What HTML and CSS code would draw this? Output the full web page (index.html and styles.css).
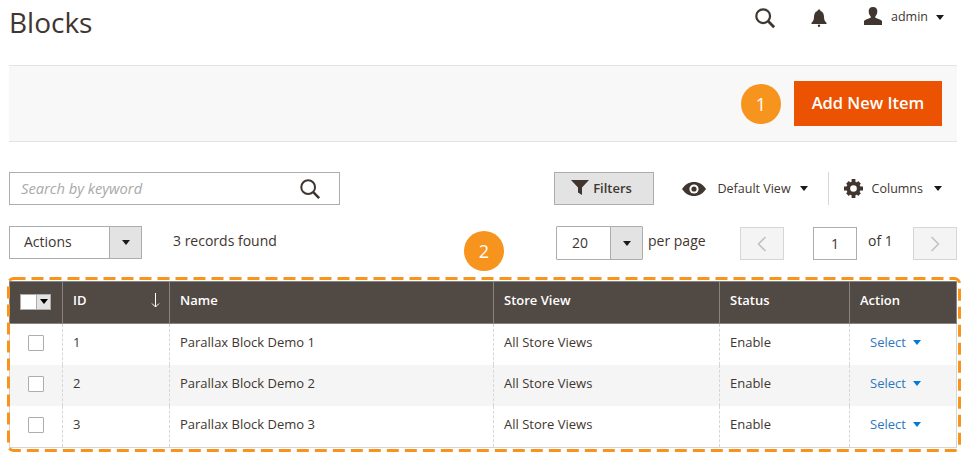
FILE: index.html
```html
<!DOCTYPE html>
<html lang="en">
<head>
    <meta charset="UTF-8">
    <title>Blocks</title>
    <link rel="stylesheet" href="styles.css">
</head>
<body>
    <div class="page">
        <header class="page-header">
            <h1>Blocks</h1>
            <div class="header-tools">
                <svg class="tool-search" width="22" height="22" viewBox="0 0 24 24"><circle cx="10" cy="10" r="7.500" fill="none" stroke="#41362f" stroke-width="2.400"/><path d="M15.500 15.500 L22 22" stroke="#41362f" stroke-width="3"/></svg>
                <svg class="tool-bell" width="16" height="18" viewBox="0 0 16 18"><path d="M8 0.500c1 0 1.500.7 1.500 1.400C12 2.700 13 5 13 8c0 3 1 4.500 2.500 5.800V15H.5v-1.200C2 12.500 3 11 3 8c0-3 1-5.300 3.500-6.100C6.500 1.200 7 .5 8 .5z" fill="#41362f"/><circle cx="8" cy="16.800" r="1.200" fill="#41362f"/></svg>
                <svg class="tool-user" width="20" height="18" viewBox="0 0 20 18"><path d="M10 0c3 0 4.500 2 4.300 4.800-.1 2-1 3.700-2 4.700v1.300c2.500 1 5.700 1.700 6.700 3.200V18H1v-4c1-1.500 4.200-2.200 6.700-3.200V9.500c-1-1-1.900-2.700-2-4.700C5.500 2 7 0 10 0z" fill="#41362f"/></svg>
                <span class="tool-name">admin</span>
                <span class="caret caret-small"></span>
            </div>
        </header>

        <div class="action-bar">
            <span class="callout callout-one">1</span>
            <button class="add-btn">Add New Item</button>
        </div>

        <div class="toolbar-row">
            <div class="search-box">
                <span class="search-hint">Search by keyword</span>
                <svg width="22" height="22" viewBox="0 0 24 24"><circle cx="10" cy="10" r="7.500" fill="none" stroke="#41362f" stroke-width="2.200"/><path d="M15.500 15.500 L22 22" stroke="#41362f" stroke-width="2.800"/></svg>
            </div>
            <div class="toolbar-right">
                <button class="filters-btn">
                    <svg width="18" height="15" viewBox="0 0 18 15"><path d="M0 0H18L11 7.500V15L7 12.500V7.500z" fill="#41362f"/></svg>
                    Filters
                </button>
                <div class="view-switch">
                    <svg width="24" height="14" viewBox="0 0 24 14"><path d="M0 7C3 2.500 7 0 12 0s9 2.500 12 7c-3 4.500-7 7-12 7S3 11.500 0 7z" fill="#41362f"/><circle cx="12" cy="7" r="4.600" fill="#fff"/><circle cx="12" cy="7" r="2.600" fill="#41362f"/></svg>
                    <span>Default View</span>
                    <span class="caret"></span>
                </div>
                <div class="columns-switch">
                    <svg width="19" height="19" viewBox="0 0 20 20"><circle cx="10" cy="10" r="5.500" fill="none" stroke="#41362f" stroke-width="4"/><path d="M8 0h4v4H8zM8 16h4v4H8zM0 8h4v4H0zM16 8h4v4h-4zM2.200 5 5 2.200 7.500 4.800 4.800 7.500zM15 2.200 17.800 5 15.200 7.500 12.500 4.800zM17.800 15 15 17.800 12.500 15.200 15.200 12.500zM5 17.800 2.200 15 4.800 12.500 7.500 15.200z" fill="#41362f"/></svg>
                    <span>Columns</span>
                    <span class="caret"></span>
                </div>
            </div>
        </div>

        <div class="pager-row">
            <div class="select-box actions-select">
                <span class="select-value">Actions</span>
                <span class="select-arrow"><span class="caret"></span></span>
            </div>
            <span class="records">3 records found</span>
            <span class="callout callout-two">2</span>
            <div class="pager">
                <div class="select-box size-select">
                    <span class="select-value">20</span>
                    <span class="select-arrow"><span class="caret"></span></span>
                </div>
                <span class="per-page">per page</span>
                <span class="page-btn"><svg width="10" height="16" viewBox="0 0 10 16"><path d="M8.500 1 L1.500 8 L8.500 15" fill="none" stroke="#c2c2c2" stroke-width="1.600"/></svg></span>
                <span class="page-input">1</span>
                <span class="page-of">of 1</span>
                <span class="page-btn"><svg width="10" height="16" viewBox="0 0 10 16"><path d="M1.500 1 L8.500 8 L1.500 15" fill="none" stroke="#c2c2c2" stroke-width="1.600"/></svg></span>
            </div>
        </div>

        <div class="grid-wrap">
            <svg class="dash-frame" width="954" height="175" viewBox="0 0 954 175"><rect x="1.500" y="1.500" width="951" height="172" rx="5" fill="none" stroke="#f7941d" stroke-width="3" stroke-dasharray="12 6"/></svg>
            <table class="grid">
                <thead>
                    <tr>
                        <th class="col-check"><span class="mass-select"><span class="mass-box"></span><span class="mass-arrow"><span class="caret"></span></span></span></th>
                        <th class="col-id">ID<svg class="sort-arrow" width="9" height="15" viewBox="0 0 9 15"><path d="M4.500 0V14M1 10.500 L4.500 14 L8 10.500" fill="none" stroke="#fff" stroke-width="1"/></svg></th>
                        <th class="col-name">Name</th>
                        <th class="col-store">Store View</th>
                        <th class="col-status">Status</th>
                        <th class="col-action">Action</th>
                    </tr>
                </thead>
                <tbody>
                    <tr>
                        <td class="cell-check"><span class="checkbox"></span></td>
                        <td>1</td>
                        <td>Parallax Block Demo 1</td>
                        <td>All Store Views</td>
                        <td>Enable</td>
                        <td class="cell-action"><span class="select-link">Select</span><span class="caret caret-blue"></span></td>
                    </tr>
                    <tr class="row-alt">
                        <td class="cell-check"><span class="checkbox"></span></td>
                        <td>2</td>
                        <td>Parallax Block Demo 2</td>
                        <td>All Store Views</td>
                        <td>Enable</td>
                        <td class="cell-action"><span class="select-link">Select</span><span class="caret caret-blue"></span></td>
                    </tr>
                    <tr class="row-last">
                        <td class="cell-check"><span class="checkbox"></span></td>
                        <td>3</td>
                        <td>Parallax Block Demo 3</td>
                        <td>All Store Views</td>
                        <td>Enable</td>
                        <td class="cell-action"><span class="select-link">Select</span><span class="caret caret-blue"></span></td>
                    </tr>
                </tbody>
            </table>
        </div>
    </div>
</body>
</html>
```

FILE: styles.css
```css
* {
    box-sizing: border-box;
}
html, body {
    height: 100%;
}
body {
    margin: 0;
    font-family: "Open Sans", sans-serif;
    font-size: 13px;
    color: #41362f;
    background-color: white;
    overflow: hidden;
}
.page {
    padding: 0 12px 0 9px;
}
.page-header {
    display: flex;
    justify-content: space-between;
    height: 65px;
}
h1 {
    margin: 3px 0 0;
    font-size: 28px;
    line-height: 38px;
    font-weight: 400;
    color: #41362f;
}
.header-tools {
    display: flex;
    align-items: flex-start;
    padding-top: 7px;
    padding-right: 13px;
}
.tool-search {
    margin-right: 35px;
}
.tool-bell {
    margin: 2px 36px 0 0;
}
.tool-user {
    margin: 0 8px 0 0;
}
.tool-name {
    font-size: 12.500px;
    line-height: 20px;
    margin-right: 8px;
    color: #41362f;
}
.caret {
    display: inline-block;
    width: 0;
    height: 0;
    border-left: 4.500px solid transparent;
    border-right: 4.500px solid transparent;
    border-top: 5px solid #1a1a1a;
}
.caret-small {
    margin-top: 8px;
}
.action-bar {
    display: flex;
    justify-content: flex-end;
    align-items: center;
    height: 77px;
    padding-right: 15px;
    background-color: #f8f8f8;
    border-top: 1px solid #e3e3e3;
    border-bottom: 1px solid #e3e3e3;
}
.callout {
    display: flex;
    align-items: center;
    justify-content: center;
    width: 40px;
    height: 40px;
    border-radius: 50%;
    background-color: #f7941d;
    color: white;
    font-size: 18px;
}
.callout-one {
    margin-right: 13px;
}
.callout-two {
    position: absolute;
    left: 464px;
    top: 231px;
}
.add-btn {
    width: 148px;
    height: 45px;
    padding: 0 0 2px;
    border: none;
    background-color: #eb5202;
    color: white;
    font-family: inherit;
    font-size: 16.500px;
    font-weight: 600;
}
.toolbar-row {
    display: flex;
    justify-content: space-between;
    margin-top: 30px;
    height: 33px;
}
.search-box {
    display: flex;
    align-items: center;
    justify-content: space-between;
    width: 331px;
    padding: 0 18px 0 11px;
    border: 1px solid #adadad;
    font-style: italic;
    font-size: 14.700px;
    color: #a9a9a9;
}
.search-hint {
    margin-bottom: 2px;
}
.toolbar-right {
    display: flex;
    align-items: center;
    padding-right: 15px;
}
.filters-btn {
    display: flex;
    align-items: center;
    justify-content: center;
    gap: 4px;
    width: 100px;
    height: 33px;
    margin-right: 28px;
    padding: 0 4px 2px 0;
    border: 1px solid #adadad;
    background-color: #e3e3e3;
    color: #41362f;
    font-family: inherit;
    font-size: 13px;
    font-weight: 600;
}
.view-switch {
    display: flex;
    align-items: center;
    height: 33px;
    padding-right: 20px;
    border-right: 1px solid #d6d6d6;
    font-size: 12.500px;
}
.view-switch span:first-of-type {
    margin: 0 9px 0 12px;
}
.columns-switch {
    display: flex;
    align-items: center;
    padding-left: 15px;
    font-size: 12.500px;
}
.columns-switch span:first-of-type {
    margin: 0 11px 0 9px;
}
.pager-row {
    display: flex;
    align-items: flex-start;
    margin-top: 21px;
    height: 34px;
    line-height: 30px;
}
.select-box {
    display: flex;
    height: 33px;
    border: 1px solid #adadad;
}
.select-value {
    flex: 1;
    line-height: 30px;
    font-size: 14px;
}
.select-arrow {
    display: flex;
    align-items: center;
    justify-content: center;
    width: 32px;
    background-color: #e3e3e3;
    border-left: 1px solid #adadad;
}
.actions-select {
    width: 133px;
}
.actions-select .select-value {
    padding-left: 14px;
}
.records {
    margin-left: 31px;
    font-size: 14px;
}
.pager {
    display: flex;
    align-items: flex-start;
    margin-left: auto;
}
.size-select {
    width: 87px;
    height: 34px;
    border-radius: 1px;
}
.size-select .select-value {
    padding-left: 15px;
    line-height: 32px;
}
.per-page {
    width: 97px;
    padding-left: 5px;
    font-size: 14px;
}
.page-btn {
    display: flex;
    align-items: center;
    justify-content: center;
    width: 44px;
    height: 33px;
    margin-top: 1px;
    border: 1px solid #d6d6d6;
    background-color: #f4f4f4;
}
.page-input {
    width: 44px;
    height: 33px;
    margin: 1px 0 0 29px;
    border: 1px solid #adadad;
    text-align: center;
    line-height: 31px;
    font-size: 14px;
}
.page-of {
    width: 56px;
    padding-left: 11px;
    font-size: 14px;
}
.grid-wrap {
    position: relative;
    margin-top: 21px;
}
.dash-frame {
    position: absolute;
    left: -2px;
    top: -4px;
    z-index: 1;
}
.grid {
    width: 948px;
    table-layout: fixed;
    border-collapse: collapse;
    font-size: 13px;
}
.grid th {
    height: 42px;
    padding: 0 10px 5px;
    text-align: left;
    background-color: #514943;
    color: white;
    font-weight: 600;
    border: 1px solid #8a837f;
}
.grid td {
    height: 41px;
    padding: 0 10px 4px;
    border-left: 1px dashed #d6d6d6;
    border-right: 1px dashed #d6d6d6;
}
.grid .row-last td {
    height: 42px;
    padding-bottom: 4px;
    border-bottom: 1px solid #d6d6d6;
}
.grid td:first-child {
    border-left: 1px solid #d6d6d6;
}
.grid td:last-child {
    border-right: 1px solid #d6d6d6;
}
.row-alt td {
    background-color: #f5f5f5;
}
.col-check {
    width: 53px;
}
.col-id {
    width: 107px;
    position: relative;
}
.col-name {
    width: 324px;
}
.col-store {
    width: 226px;
}
.col-status {
    width: 130px;
}
.sort-arrow {
    position: absolute;
    right: 9px;
    top: 11px;
}
.mass-select {
    display: flex;
    width: 31px;
    height: 16px;
    margin-top: 3px;
    border: 1px solid #adadad;
}
.mass-box {
    width: 15px;
    background-color: white;
}
.mass-arrow {
    display: flex;
    flex: 1;
    align-items: center;
    justify-content: center;
    background-color: #e3e3e3;
    border-left: 1px solid #adadad;
}
.mass-arrow .caret {
    border-top-color: #000;
}
.grid .cell-check {
    padding-bottom: 2px;
    text-align: center;
}
.grid .row-last .cell-check {
    padding-bottom: 3px;
}
.checkbox {
    display: block;
    width: 16px;
    height: 16px;
    margin: 0 auto;
    border: 1px solid #adadad;
    border-radius: 1px;
    background-color: white;
}
.grid .cell-action {
    padding-left: 20px;
}
.select-link {
    color: #2d78bd;
    margin-right: 7px;
}
.caret-blue {
    border-top-color: #007bdb;
    vertical-align: 2px;
}
```
